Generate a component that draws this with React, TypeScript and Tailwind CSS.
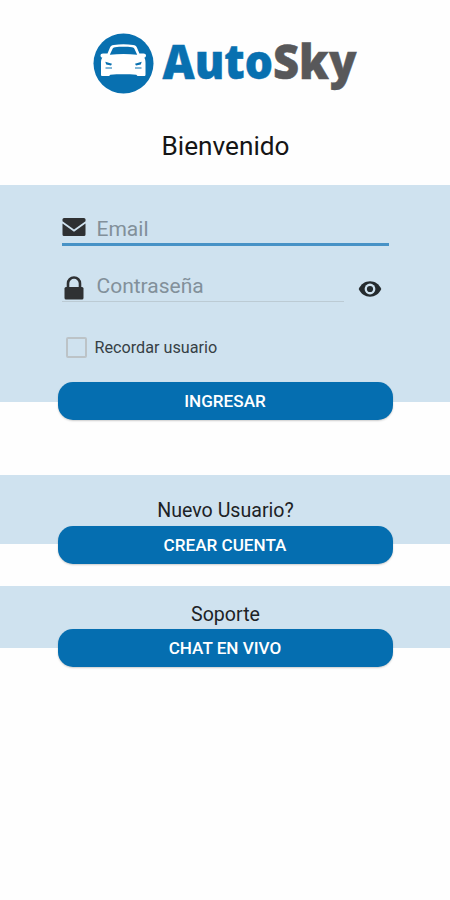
import { useState } from 'react'
import type { ReactNode } from 'react'

function Logo() {
  return (
    <svg className="w-[280px] h-[80px]" viewBox="85 24 280 80" aria-label="AutoSky">
      <circle cx="123.5" cy="63.5" r="30" fill="#0870b0" />
      <path
        fill="#fff"
        d="M100.500 55.500c0-1.300 1-2 2.500-2h4.500l2.500-6c.7-1.500 1.700-2.300 3.700-2.600 6-.8 13.500-.8 19.500 0 2 .3 3 1.100 3.700 2.600l2.500 6h4.100c1.500 0 2.500.7 2.500 2s-.7 2-1.700 2.100c.9 1.500 1.200 3 1.200 5.200v12c0 .8-.5 1.200-1.200 1.200h-6.800l-1.200-1.300c-8-.6-18-.6-26 0l-1.200 1.300h-6.900c-.7 0-1.200-.4-1.200-1.200v-12c0-2.200.4-3.700 1.300-5.200-1-.1-1.800-.8-1.800-2.100z"
      />
      <path fill="#0870b0" d="M109.800 54.700l2.700-5.700c.5-1 1.200-1.500 2.500-1.700 5-.6 12-.6 17 0 1.300.2 2 .7 2.500 1.700l2.700 5.700c-9-.9-18.400-.9-27.400 0z" />
      <path fill="#0870b0" d="M105.300 61.800l6.700 1.900-1 1.700-4.800-.8zM141.700 61.800l-6.700 1.900 1 1.700 4.800-.8z" />
      <path fill="none" stroke="#0870b0" strokeWidth="1" d="M105.500 68h6.500M135 68h6.500" />
      <text
        x="162.500"
        y="79"
        fontFamily="'Noto Sans', 'Open Sans', sans-serif"
        fontWeight="900"
        fontSize="48"
        strokeWidth=".5"
        textLength="194"
        lengthAdjust="spacingAndGlyphs"
      >
        <tspan fill="#0870b0" stroke="#0870b0" fontSize="47">Auto</tspan>
        <tspan fill="#58585a" stroke="#58585a">Sky</tspan>
      </text>
    </svg>
  )
}

function MailIcon() {
  return (
    <svg className="w-6 h-[18px]" viewBox="0 0 24 18">
      <path fill="#2f3133" d="M2 0h20q1.500 0 1.500 1.500v1.800L12 11.500 .5 3.300V1.500Q.5 0 2 0z" />
      <path fill="#2f3133" d="M.5 5.500L12 13.700l11.500-8.200v11q0 1.500-1.500 1.500H2q-1.500 0-1.500-1.500z" />
    </svg>
  )
}

function LockIcon() {
  return (
    <svg className="w-5 h-6" viewBox="0 0 20 24">
      <path fill="none" stroke="#2f3133" strokeWidth="2.600" d="M4 12V7.500a6 6 0 0 1 12 0V12" />
      <rect x=".5" y="11" width="19" height="12.500" rx="1.500" fill="#2f3133" />
    </svg>
  )
}

function EyeIcon() {
  return (
    <svg className="w-6 h-4" viewBox="0 0 24 16">
      <path fill="#252b2e" d="M.7 8C3 3 7.200.3 12 .3S21 3 23.300 8C21 13 16.800 15.700 12 15.700S3 13 .7 8z" />
      <circle cx="12" cy="8" r="5.400" fill="#cfe2ef" />
      <circle cx="12" cy="8" r="3.100" fill="#252b2e" />
    </svg>
  )
}

function Button({ children }: { children: ReactNode }) {
  return (
    <button className="w-[335px] h-[38px] pt-[2px] shrink-0 rounded-[15px] bg-[#056eb0] text-white text-[17.1px] font-medium shadow-[0_1px_2px_rgba(0,0,0,0.2)]">
      {children}
    </button>
  )
}

export default function App() {
  const [visible, setVisible] = useState(false)
  const [remember, setRemember] = useState(false)

  return (
    <div className="w-full h-[900px] bg-[#fefefe] overflow-hidden font-[Roboto,sans-serif] text-[#1d2226]">
      <header className="h-[185px] pt-[24px] flex flex-col items-center">
        <Logo />
        <h1 className="mt-[24px] pl-px text-[26.2px] leading-9 text-[#151515]">Bienvenido</h1>
      </header>

      <section className="h-[217px] bg-[#cfe2ef] flex flex-col items-center">
        <div className="w-[327px] h-[197px] shrink-0 pt-[26px]">
          <div className="h-[35px] flex items-start border-b-3 border-[#4792c6]">
            <div className="w-[35px] pt-[7px]">
              <MailIcon />
            </div>
            <input
              type="email"
              placeholder="Email"
              className="w-[280px] h-[32px] pt-[4px] text-[21px] outline-none placeholder:text-[#82909a]"
            />
          </div>
          <div className="mt-[22px] flex">
            <div className="w-[282px] h-[34px] flex items-start border-b border-[#bccbd4]">
              <div className="w-[35px] pt-[8px] pl-[2px]">
                <LockIcon />
              </div>
              <input
                type={visible ? 'text' : 'password'}
                placeholder="Contraseña"
                className="w-[240px] h-[33px] pt-[2px] text-[21px] outline-none placeholder:text-[#82909a]"
              />
            </div>
            <button className="ml-[14px] mt-[13px] w-6 h-4" onClick={() => setVisible(!visible)}>
              <EyeIcon />
            </button>
          </div>
          <label className="mt-[34px] ml-[4px] h-[22px] flex items-center gap-[8px] text-[16.200px] text-[#363f45]">
            <input
              type="checkbox"
              checked={remember}
              onChange={() => setRemember(!remember)}
              className="appearance-none w-[21px] h-[21px] border-2 border-[#bcc3c7] rounded-[2px] checked:bg-[#056eb0]"
            />
            <span className="pt-[2px]">Recordar usuario</span>
          </label>
        </div>
        <Button>INGRESAR</Button>
      </section>

      <section className="mt-[73px] h-[69px] bg-[#cfe2ef] flex flex-col items-center">
        <p className="h-[51px] shrink-0 pt-[24px] pl-px text-[19.6px] leading-6">Nuevo Usuario?</p>
        <Button>CREAR CUENTA</Button>
      </section>

      <section className="mt-[42px] h-[62px] bg-[#cfe2ef] flex flex-col items-center">
        <p className="h-[43px] shrink-0 pt-[17px] pl-px text-[19.6px] leading-6">Soporte</p>
        <Button>CHAT EN VIVO</Button>
      </section>
    </div>
  )
}
